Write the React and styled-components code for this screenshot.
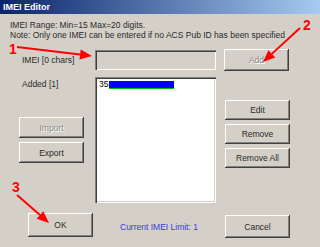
import React from 'react';
import styled, { createGlobalStyle } from 'styled-components';

const GlobalStyle = createGlobalStyle`
  html, body {
    margin: 0;
    padding: 0;
    background: #d4d0c8;
  }
`;

const Window = styled.div`
  position: relative;
  width: 320px;
  height: 247px;
  overflow: hidden;
  background: #d4d0c8;
  font-family: 'Liberation Sans', Arial, sans-serif;
  font-size: 8.5px;
  color: #000;
`;

const TitleBar = styled.div`
  height: 14px;
  padding-left: 3px;
  display: flex;
  align-items: center;
  background: linear-gradient(to right, #0a246a, #a6caf0);
  color: #fff;
  font-weight: bold;
  font-size: 9px;
`;

const Body = styled.div`
  padding: 6px 0 0 10px;
`;

const Note = styled.div`
  line-height: 10px;
  white-space: nowrap;
  color: #2a2a2a;
`;

const Grid = styled.div`
  margin-top: 9px;
  display: grid;
  grid-template-columns: 77px 121px 67px;
  grid-template-rows: 28px 136px 25px;
  column-gap: 8px;
`;

const Label = styled.div`
  padding-left: ${(p) => p.$indent || 12}px;
  line-height: ${(p) => p.$lh || 22}px;
  color: ${(p) => p.$color || '#2a2a2a'};
  white-space: nowrap;
`;

const Input = styled.div`
  margin-top: 1px;
  height: 20px;
  background: #d4d0c8;
  box-shadow: inset 1px 1px #808080, inset 2px 2px #404040,
    inset -1px -1px #fff, inset -2px -2px #d4d0c8;
`;

const ListBox = styled.div`
  height: 126px;
  background: #fff;
  box-shadow: inset 1px 1px #808080, inset 2px 2px #404040,
    inset -1px -1px #fff, inset -2px -2px #d4d0c8;
  padding: 3px 0 0 4px;
  box-sizing: border-box;
`;

const Item = styled.div`
  display: flex;
  align-items: center;
  height: 9px;
  line-height: 9px;
`;

const Scribble = styled.span`
  display: inline-block;
  width: 65px;
  height: 8px;
  margin-left: 1px;
  background: linear-gradient(to bottom, #0000ff 0 85%, #00c000 85%);
`;

const Button = styled.div`
  width: ${(p) => p.$w || 65}px;
  height: ${(p) => p.$h || 21}px;
  margin-top: ${(p) => p.$mt || 0}px;
  margin-left: ${(p) => p.$ml || 0}px;
  display: flex;
  align-items: center;
  justify-content: center;
  background: #d4d0c8;
  box-shadow: inset -1px -1px #404040, inset 1px 1px #fff,
    inset -2px -2px #808080;
  color: ${(p) => (p.$disabled ? '#8a8a8a' : '#2a2a2a')};
  text-shadow: ${(p) => (p.$disabled ? '1px 1px #fff' : 'none')};
  box-sizing: border-box;
`;

const Column = styled.div`
  display: flex;
  flex-direction: column;
  gap: 4px;
  padding-top: ${(p) => p.$pt || 0}px;
`;

const Overlay = styled.svg`
  position: absolute;
  left: 0;
  top: 0;
  pointer-events: none;
`;

const Marker = styled.span`
  position: absolute;
  left: ${(p) => p.$x}px;
  top: ${(p) => p.$y}px;
  color: #f00;
  font-weight: bold;
  font-size: 14px;
  line-height: 14px;
`;

const Arrow = ({ x1, y1, x2, y2 }) => {
  const a = Math.atan2(y2 - y1, x2 - x1);
  const len = 12;
  const w = 5;
  const bx = x2 - Math.cos(a) * len;
  const by = y2 - Math.sin(a) * len;
  const px = -Math.sin(a) * w;
  const py = Math.cos(a) * w;
  return (
    <g fill="#f00" stroke="#f00">
      <line x1={x1} y1={y1} x2={bx} y2={by} strokeWidth="2" />
      <polygon
        points={`${x2},${y2} ${bx + px},${by + py} ${bx - px},${by - py}`}
        strokeWidth="0"
      />
    </g>
  );
};

export default function App() {
  return (
    <>
      <GlobalStyle />
      <Window>
        <TitleBar>IMEI Editor</TitleBar>
        <Body>
          <Note>IMEI Range: Min=15 Max=20 digits.</Note>
          <Note>Note: Only one IMEI can be entered if no ACS Pub ID has been specified</Note>
          <Grid>
            <Label>IMEI [0 chars]</Label>
            <Input />
            <Button $h={22} $disabled>Add</Button>

            <Column>
              <Label $lh={14}>Added [1]</Label>
              <Button $ml={9} $mt={22} $disabled>Import</Button>
              <Button $ml={9}>Export</Button>
            </Column>
            <ListBox>
              <Item>
                35<Scribble />
              </Item>
            </ListBox>
            <Column $pt={23}>
              <Button $ml={1} $h={20}>Edit</Button>
              <Button $ml={1} $h={20}>Remove</Button>
              <Button $ml={1} $h={20}>Remove All</Button>
            </Column>

            <Button $ml={18} $h={24}>OK</Button>
            <Label $indent={25} $lh={28} $color="#3a3ad8">Current IMEI Limit: 1</Label>
            <Button $ml={1} $mt={2} $h={23}>Cancel</Button>
          </Grid>
        </Body>

        <Overlay width="320" height="247">
          <Arrow x1={17} y1={47} x2={92} y2={56} />
          <Arrow x1={300} y1={28} x2={263} y2={62} />
          <Arrow x1={17} y1={195} x2={49} y2={223} />
        </Overlay>
        <Marker $x={9} $y={42}>1</Marker>
        <Marker $x={303} $y={18}>2</Marker>
        <Marker $x={12} $y={180}>3</Marker>
      </Window>
    </>
  );
}
